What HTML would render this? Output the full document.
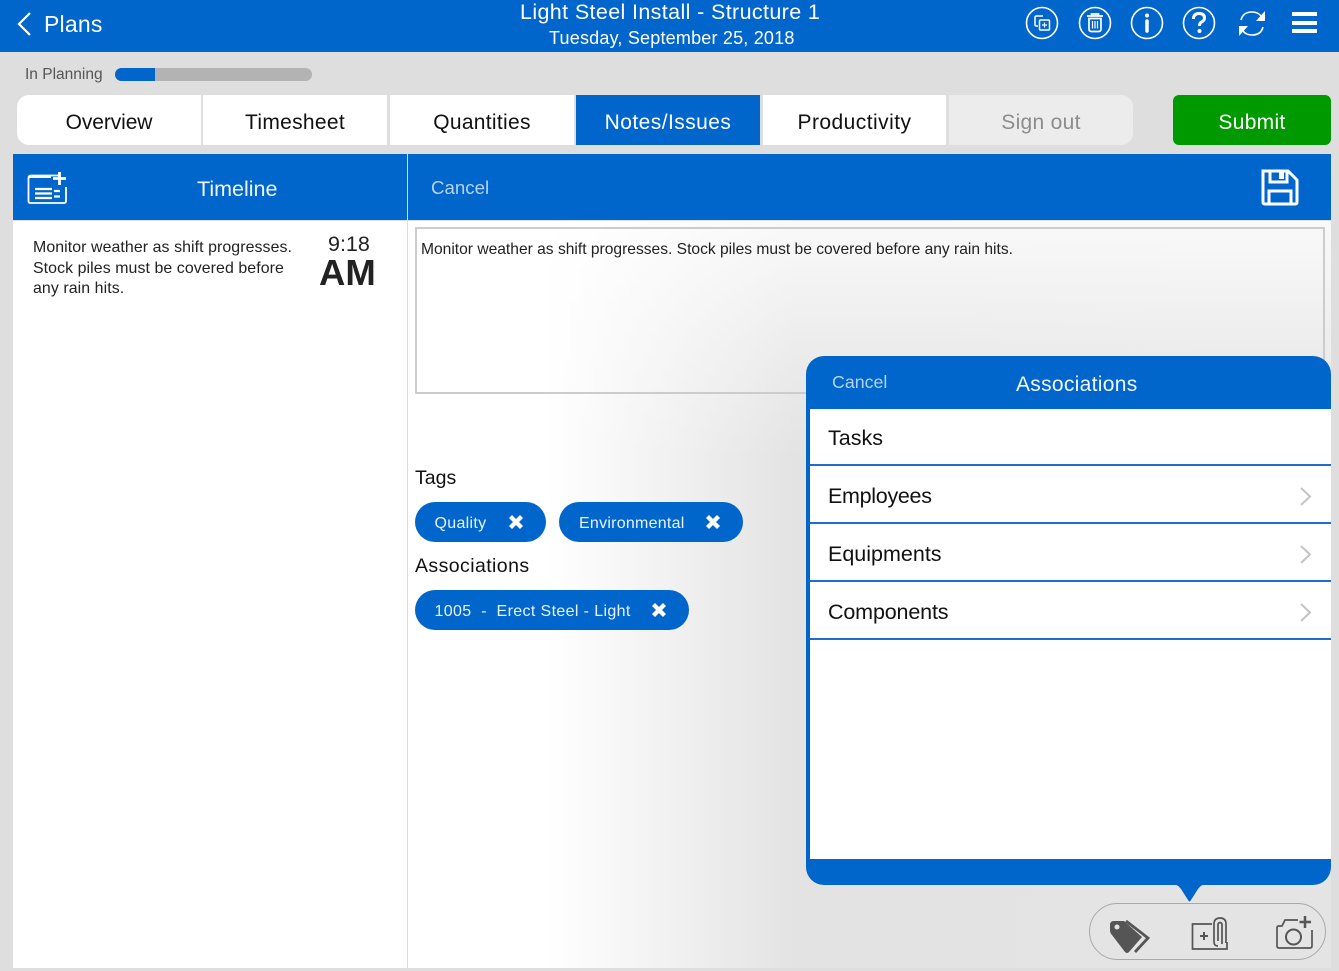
<!DOCTYPE html>
<html><head><meta charset="utf-8"><style>
*{box-sizing:border-box}
html,body{margin:0;padding:0}
body{width:1339px;height:971px;overflow:hidden;background:#dedede;font-family:"Liberation Sans",sans-serif;position:relative}
.a{position:absolute}
.t{position:absolute;white-space:nowrap;line-height:1}
.tab{position:absolute;top:95px;height:50px;background:#fff;color:#111;font-size:21px;letter-spacing:.3px;text-align:center;line-height:56px}
.pill{position:absolute;height:40px;border-radius:20px;background:#0066cc}
.pill .t{color:#e8f2fb;font-size:16px;top:14px;letter-spacing:.3px}
.row{position:absolute;left:810px;width:521px;height:58px;background:#fff;border-bottom:2px solid #1a70c8}
.row .t{left:18px;font-size:21.5px;color:#111}
svg{position:absolute;overflow:visible}
</style></head><body>
<div class="a" style="left:0;top:0;width:1339px;height:52px;background:#0066cc"></div>
<svg style="left:0;top:0" width="60" height="52"><path d="M30 13 L19 24 L30 35" fill="none" stroke="#fff" stroke-width="2.2"/></svg>
<div class="t" style="left:44px;top:13px;color:#fff;font-size:23px;letter-spacing:.2px">Plans</div>
<div class="t" style="left:520px;top:2px;color:#fff;font-size:21.5px;letter-spacing:.37px">Light Steel Install - Structure 1</div>
<div class="t" style="left:549px;top:29px;color:#fff;font-size:18px;letter-spacing:.2px">Tuesday, September 25, 2018</div>
<svg style="left:1000px;top:0" width="339" height="52" fill="none" stroke="#fff" stroke-width="1.6">
<circle cx="42" cy="23" r="15.5"/><circle cx="95" cy="23" r="15.5"/><circle cx="147" cy="23" r="15.5"/><circle cx="199" cy="23" r="15.5"/>
<path d="M43 16H36.500Q35 16 35 17.500V24.500Q35 26 36.500 26H38" stroke-width="1.500"/><rect x="39.500" y="20" width="10" height="10" rx="1" stroke-width="1.500"/><path d="M44.500 22.500V27.500M42 25H47" stroke-width="1.200"/>
<path d="M87 16H103M91.500 16V14H98.500V16M89 18.500V29Q89 31.500 91.500 31.500H98.500Q101 31.500 101 29V18.500Z" stroke-width="1.700"/><path d="M92.500 21V28.500M95 21V28.500M97.500 21V28.500" stroke-width="1.200"/>
<path d="M147 21V31" stroke-width="3.500" stroke-linecap="round"/><circle cx="147" cy="15.500" r="2" fill="#fff" stroke="none"/>
<path d="M193.500 19Q193.500 13.500 199 13.500Q204.500 13.500 204.500 18Q204.500 20.500 201.500 22Q199.500 23 199.500 26" stroke-width="3"/><circle cx="199.500" cy="31" r="2" fill="#fff" stroke="none"/>
<path d="M1241 20Q1243 12 1252 12Q1258 12 1261 16" transform="translate(-1000 0)" stroke-width="1.600"/><path d="M1265 11V21H1256Z" transform="translate(-1000 0)" fill="#fff" stroke="none"/>
<path d="M1263 27Q1261 35 1252 35Q1246 35 1243 31" transform="translate(-1000 0)" stroke-width="1.600"/><path d="M1239 36V26H1248Z" transform="translate(-1000 0)" fill="#fff" stroke="none"/>
<path d="M292 14H317M292 23H317M292 31H317" stroke-width="4"/>
</svg>

<div class="t" style="left:25px;top:67px;color:#555;font-size:15.500px">In Planning</div>
<div class="a" style="left:115px;top:68px;width:197px;height:13px;border-radius:7px;background:#b3b3b3"></div>
<div class="a" style="left:115px;top:68px;width:40px;height:13px;border-radius:7px 0 0 7px;background:#0066cc"></div>

<div class="tab" style="left:17px;width:184px;border-radius:12px 0 0 12px;letter-spacing:-.1px">Overview</div>
<div class="tab" style="left:203px;width:184px">Timesheet</div>
<div class="tab" style="left:390px;width:184px">Quantities</div>
<div class="tab" style="left:576px;width:184px;background:#0066cc;color:#fff;letter-spacing:.45px">Notes/Issues</div>
<div class="tab" style="left:763px;width:183px;letter-spacing:.45px">Productivity</div>
<div class="tab" style="left:949px;width:184px;background:#ececec;color:#8c8c8c;border-radius:0 12px 12px 0">Sign out</div>
<div class="tab" style="left:1173px;width:158px;background:#009a00;color:#fff;border-radius:6px">Submit</div>

<div class="a" style="left:13px;top:154px;width:394px;height:66px;background:#0066cc"></div>
<div class="a" style="left:408px;top:154px;width:923px;height:66px;background:#0066cc"></div>
<div class="a" style="left:13px;top:221px;width:394px;height:747px;background:#fff"></div>
<div class="a" style="left:408px;top:221px;width:923px;height:747px;background:linear-gradient(180deg,rgba(255,255,255,.8),rgba(255,255,255,.35) 16%,rgba(255,255,255,0) 32%),linear-gradient(90deg,#fff 15%,#e3e3e3 42%,#e4e4e4 100%)"></div>

<svg style="left:13px;top:154px" width="70" height="66" fill="none" stroke="#fff">
<path d="M47 21.500H18Q15.500 21.500 15.500 24V47Q15.500 49 17.500 49H51Q53 49 53 47V33" stroke-width="1.800"/>
<path d="M16 21H38V24H16Z" fill="#fff" stroke="none"/>
<path d="M40 24.500H53M46.500 18V31" stroke-width="2.800"/>
<path d="M22 35H39M22 39.500H39M22 44H39M41 37H47M41 42.500H47" stroke-width="2.200"/>
</svg>
<div class="t" style="left:197px;top:179px;color:#f0f6fc;font-size:21.500px">Timeline</div>
<div class="t" style="left:431px;top:179px;color:#b5d3f1;font-size:18.700px">Cancel</div>
<svg style="left:1260px;top:168px" width="40" height="40" fill="none" stroke="#fff" stroke-width="3">
<path d="M3.500 3H28L37 12V34Q37 36 35 36H5Q3 36 3 34V3Z"/>
<path d="M10 3V14H27V3"/><rect x="19" y="4" width="5" height="7" fill="#fff" stroke="none"/><path d="M9 36V23H31V36"/></svg>

<div class="t" style="left:33px;top:238px;font-size:15.900px;letter-spacing:.08px;color:#222;line-height:20.700px;white-space:normal;width:275px">Monitor weather as shift progresses.<br>Stock piles must be covered before<br>any rain hits.</div>
<div class="t" style="left:328px;top:234px;font-size:21.500px;color:#222">9:18</div>
<div class="t" style="left:319px;top:255px;font-size:36.500px;font-weight:bold;color:#222">AM</div>

<div class="a" style="left:415px;top:227px;width:910px;height:167px;border:2px solid #cccccc"></div>
<div class="t" style="left:421px;top:242px;font-size:15.600px;color:#222">Monitor weather as shift progresses. Stock piles must be covered before any rain hits.</div>

<div class="t" style="left:415px;top:469px;font-size:19.500px;color:#111">Tags</div>
<div class="pill" style="left:415px;top:502px;width:131px"><div class="t" style="left:19.500px">Quality</div><svg style="left:93px;top:12px" width="16" height="16"><path d="M2.500 2.500L13.500 13.500M13.500 2.500L2.500 13.500" stroke="#fff" stroke-width="4.300"/></svg></div>
<div class="pill" style="left:559px;top:502px;width:184px"><div class="t" style="left:20px;letter-spacing:.25px">Environmental</div><svg style="left:146px;top:12px" width="16" height="16"><path d="M2.500 2.500L13.500 13.500M13.500 2.500L2.500 13.500" stroke="#fff" stroke-width="4.300"/></svg></div>
<div class="t" style="left:415px;top:557px;font-size:19.500px;color:#111;letter-spacing:.42px">Associations</div>
<div class="pill" style="left:415px;top:590px;width:274px"><div class="t" style="left:19.500px;white-space:pre;letter-spacing:.37px">1005  -  Erect Steel - Light</div><svg style="left:236px;top:12px" width="16" height="16"><path d="M2.500 2.500L13.500 13.500M13.500 2.500L2.500 13.500" stroke="#fff" stroke-width="4.300"/></svg></div>

<div class="a" style="left:806px;top:356px;width:525px;height:529px;background:#0066cc;border-radius:18px"></div>
<svg style="left:1170px;top:884px" width="40" height="22"><path d="M4 0H35Q31 1 28 5L21 16Q19.500 19 18 16L11 5Q8 1 4 0Z" fill="#0066cc"/></svg>
<div class="t" style="left:832px;top:374px;color:#b5d3f1;font-size:17.800px">Cancel</div>
<div class="t" style="left:1016px;top:374px;color:#f0f6fc;font-size:21px;letter-spacing:.3px">Associations</div>
<div class="a" style="left:810px;top:409px;width:521px;height:450px;background:#fff"></div>
<div class="row" style="top:409px;height:57px"><div class="t" style="top:19px">Tasks</div></div>
<div class="row" style="top:466px;height:58px"><div class="t" style="top:20px;letter-spacing:-.3px">Employees</div></div>
<div class="row" style="top:524px;height:58px"><div class="t" style="top:20px">Equipments</div></div>
<div class="row" style="top:582px;height:58px"><div class="t" style="top:20px;letter-spacing:-.15px">Components</div></div>
<svg style="left:1295px;top:480px" width="20" height="150" fill="none" stroke="#c4c4c4" stroke-width="2"><path d="M6 8L15 16.500L6 25M6 66L15 74.500L6 83M6 124L15 132.500L6 141"/></svg>

<div class="a" style="left:1089px;top:903px;width:237px;height:57px;border:1.500px solid #a9a9a9;border-radius:29px"></div>
<svg style="left:1100px;top:910px" width="230" height="46" fill="#555" stroke="none">
<path d="M10 15Q10 11 14 11H24L42 27L29 42Q27 44 25 42L12 25Q10 23 10 20Z"/><circle cx="17" cy="17" r="2.500" fill="#e4e4e4"/>
<path d="M26 11L48 28L35 42" fill="none" stroke="#555" stroke-width="2.800"/>
<g fill="none" stroke="#555" stroke-width="1.700">
<path d="M112 14H92.500V39H127V32"/>
<path d="M100 26H108M104 22V30" stroke-width="2"/>
<path d="M118 36Q114 36 114 32V14Q114 8 120 8Q126 8 126 14V33"/>
<path d="M118 31V14Q120 11 122 14V34"/>
<path d="M198 10H185L182 16H179Q177 16 177 18V36Q177 38 179 38H210Q212 38 212 36V20"/>
<circle cx="193.500" cy="27" r="7.500" stroke-width="2"/>
<path d="M199.500 12H211M205 6V18" stroke-width="2.500"/></g></svg>
</body></html>
